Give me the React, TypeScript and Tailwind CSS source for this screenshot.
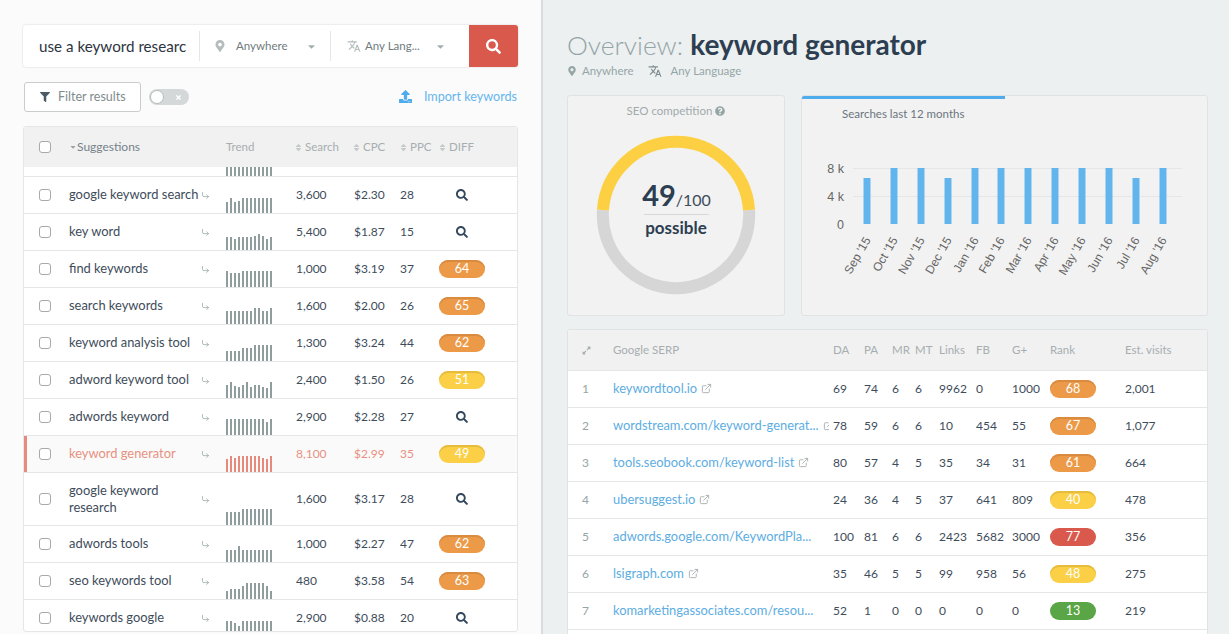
import { CornerDownRight, ExternalLink } from "lucide-react";
import { FaCaretDown, FaExpandAlt, FaFilter, FaMapMarkerAlt, FaQuestionCircle, FaSearch, FaSort, FaTimes, FaUpload } from "react-icons/fa";
import { MdTranslate } from "react-icons/md";

const orange = "bg-[#ec9a48] shadow-[inset_0_2px_0_#d98b40]";
const yellow = "bg-[#fbd046] shadow-[inset_0_2px_0_#e6bc3e]";
const red = "bg-[#d9594c]";
const green = "bg-[#5aa545]";

function badgeColor(n: number) {
  if (n < 30) return green;
  if (n < 60) return yellow;
  if (n < 70) return orange;
  return red;
}

const keywords = [
  { name: "google keyword search", search: "3,600", cpc: "$2.30", ppc: 28, diff: 0, bars: [11, 15, 11, 12, 15, 15, 15, 15, 15, 15, 15, 15] },
  { name: "key word", search: "5,400", cpc: "$1.87", ppc: 15, diff: 0, bars: [13, 13, 11, 13, 13, 13, 13, 14, 16, 14, 11, 13] },
  { name: "find keywords", search: "1,000", cpc: "$3.19", ppc: 37, diff: 64, bars: [16, 14, 14, 14, 16, 16, 16, 16, 16, 16, 16, 16] },
  { name: "search keywords", search: "1,600", cpc: "$2.00", ppc: 26, diff: 65, bars: [13, 13, 13, 13, 13, 13, 13, 16, 16, 13, 13, 16] },
  { name: "keyword analysis tool", search: "1,300", cpc: "$3.24", ppc: 44, diff: 62, bars: [10, 10, 10, 10, 13, 13, 13, 16, 16, 16, 16, 16] },
  { name: "adword keyword tool", search: "2,400", cpc: "$1.50", ppc: 26, diff: 51, bars: [13, 16, 12, 11, 13, 16, 11, 13, 13, 11, 10, 16] },
  { name: "adwords keyword", search: "2,900", cpc: "$2.28", ppc: 27, diff: 0, bars: [16, 16, 16, 16, 16, 16, 16, 16, 16, 16, 13, 16] },
  { name: "keyword generator", search: "8,100", cpc: "$2.99", ppc: 35, diff: 49, active: true, bars: [13, 16, 14, 16, 16, 16, 16, 16, 16, 14, 13, 16] },
  { name: "google keyword research", search: "1,600", cpc: "$3.17", ppc: 28, diff: 0, tall: true, bars: [13, 13, 13, 13, 16, 16, 16, 16, 16, 16, 16, 16] },
  { name: "adwords tools", search: "1,000", cpc: "$2.27", ppc: 47, diff: 62, bars: [12, 12, 12, 16, 12, 12, 12, 12, 12, 12, 12, 12] },
  { name: "seo keywords tool", search: "480", cpc: "$3.58", ppc: 54, diff: 63, bars: [8, 10, 10, 10, 13, 16, 16, 16, 16, 16, 13, 8] },
  { name: "keywords google", search: "2,900", cpc: "$0.88", ppc: 20, diff: 0, bars: [15, 15, 13, 10, 15, 15, 15, 15, 15, 15, 15, 15] },
];

const serp = [
  { url: "keywordtool.io", da: 69, pa: 74, mr: 6, mt: 6, links: 9962, fb: 0, gp: 1000, rank: 68, visits: "2,001", icon: true },
  { url: "wordstream.com/keyword-generat...", da: 78, pa: 59, mr: 6, mt: 6, links: 10, fb: 454, gp: 55, rank: 67, visits: "1,077", icon: true },
  { url: "tools.seobook.com/keyword-list", da: 80, pa: 57, mr: 4, mt: 5, links: 35, fb: 34, gp: 31, rank: 61, visits: "664", icon: true },
  { url: "ubersuggest.io", da: 24, pa: 36, mr: 4, mt: 5, links: 37, fb: 641, gp: 809, rank: 40, visits: "478", icon: true },
  { url: "adwords.google.com/KeywordPla...", da: 100, pa: 81, mr: 6, mt: 6, links: 2423, fb: 5682, gp: 3000, rank: 77, visits: "356", icon: false },
  { url: "lsigraph.com", da: 35, pa: 46, mr: 5, mt: 5, links: 99, fb: 958, gp: 56, rank: 48, visits: "275", icon: true },
  { url: "komarketingassociates.com/resou...", da: 52, pa: 1, mr: 0, mt: 0, links: 0, fb: 0, gp: 0, rank: 13, visits: "219", icon: false },
];

const months = ["Sep '15", "Oct '15", "Nov '15", "Dec '15", "Jan '16", "Feb '16", "Mar '16", "Apr '16", "May '16", "Jun '16", "Jul '16", "Aug '16"];
const barX = [65, 92, 119, 146, 173, 199, 226, 253, 280, 307, 334, 361];
const barTop = [56, 46, 46, 56, 46, 46, 46, 46, 46, 46, 56, 46];

function Check() {
  return <input type="checkbox" className="appearance-none block w-[12px] h-[12px] rounded-[3px] border border-[#a9a9a9] bg-white" />;
}

function Badge({ value }: { value: number }) {
  return <div className={"w-[46px] h-[18px] rounded-[9px] text-white text-[12.5px] leading-[18px] text-center " + badgeColor(value)}>{value}</div>;
}

function Trend({ bars, color }: { bars: number[]; color: string }) {
  return (
    <div className="flex items-end gap-[2px] h-full">
      {bars.map((h, i) => (
        <div key={i} className={"w-[2px] " + color} style={{ height: h }} />
      ))}
    </div>
  );
}

function SortHead({ label, width }: { label: string; width: string }) {
  return (
    <div className={"flex items-center gap-[2px] " + width}>
      <FaSort className="text-[#c5c9ca] -ml-[2px]" size={9} />
      <span>{label}</span>
    </div>
  );
}

export default function App() {
  return (
    <div className="flex w-[1229px] h-[634px] overflow-hidden bg-[#ecf0f1] font-['Lato','Noto_Sans',sans-serif] text-[13px] text-[#3e4c5a]">
      <aside className="w-[543px] h-full shrink-0 bg-[#fbfbfb] border-r-2 border-[#d8dcde] pl-[23px] pr-[23px] pt-[25px]">
        <div className="flex items-stretch h-[42px] bg-white rounded-[3px] shadow-[0_0_2px_rgba(0,0,0,0.2)] overflow-hidden">
          <div className="w-[176px] flex items-center pl-[16px] border-0">
            <div className="whitespace-nowrap text-[15.2px] text-[#2c3440]">use a keyword researc</div>
          </div>
          <div className="w-[131px] flex items-center my-[6px] border-l border-[#e6e6e6] pl-[14px] text-[11.5px] text-[#6f7b7d]">
            <FaMapMarkerAlt className="text-[#b4bcbe] mr-[10px]" size={12} />
            <span className="w-[70px]">Anywhere</span>
            <FaCaretDown className="text-[#a5adb0]" size={11} />
          </div>
          <div className="w-[139px] flex items-center my-[6px] border-l border-[#e6e6e6] pl-[16px] text-[11.5px] text-[#6f7b7d]">
            <MdTranslate className="text-[#b4bcbe] mr-[4px]" size={14} />
            <span className="w-[70px]">Any Lang...</span>
            <FaCaretDown className="text-[#a5adb0]" size={11} />
          </div>
          <div className="w-[49px] bg-[#d9594c] flex items-center justify-center">
            <FaSearch className="text-white" size={15} />
          </div>
        </div>

        <div className="flex items-center h-[30px] mt-[15px]">
          <div className="w-[117px] h-[30px] ml-[1px] flex items-center pl-[15px] gap-[8px] border border-[#c9cccd] rounded-[3px] bg-white text-[12.5px] text-[#7f8c8d]">
            <FaFilter className="text-[#4c5a66]" size={10} />
            <span>Filter results</span>
          </div>
          <div className="relative w-[40px] h-[16px] ml-[8px] rounded-[8px] bg-[#d5d8d9] flex items-center">
            <div className="w-[14px] h-[14px] ml-[1px] rounded-full bg-white border border-[#b7bbbd]" />
            <FaTimes className="text-white ml-[11px]" size={7} />
          </div>
          <div className="ml-auto pr-[1px] flex items-center text-[12.6px] text-[#65b6ee]">
            <FaUpload className="text-[#4facec] mr-[12px]" size={13} />
            <span>Import keywords</span>
          </div>
        </div>

        <div className="mt-[14px] h-[506px] bg-white rounded-[3px] border border-[#e6e6e6] overflow-hidden">
          <div className="flex items-center h-[40px] bg-[#f1f1f1] text-[11.5px] text-[#a6aeb0]">
            <div className="w-[45px] pl-[15px]"><Check /></div>
            <div className="w-[157px] flex items-center text-[12px] text-[#76828a]">
              <FaCaretDown className="text-[#9aa2a5]" size={8} />
              <span>Suggestions</span>
            </div>
            <div className="w-[70px]">Trend</div>
            <SortHead label="Search" width="w-[58px]" />
            <SortHead label="CPC" width="w-[47px]" />
            <SortHead label="PPC" width="w-[39px]" />
            <SortHead label="DIFF" width="w-[46px]" />
          </div>
          <div className="flex h-[10px] border-b border-[#e4e6e7]">
            <div className="ml-[202px] h-[9px]">
              <Trend bars={[9, 9, 9, 9, 9, 9, 9, 9, 9, 9, 9, 9]} color="bg-[#8f9d9e]" />
            </div>
          </div>
          {keywords.map((k) => (
            <div
              key={k.name}
              className={
                "flex items-center border-b border-[#e4e6e7] " +
                (k.tall ? "h-[53px] " : "h-[37px] ") +
                (k.active ? "bg-[#fafafa] text-[#e8907f] shadow-[inset_3px_0_0_#e8897d]" : "")
              }
            >
              <div className="w-[45px] pl-[15px] shrink-0"><Check /></div>
              <div className="w-[132px] shrink-0 leading-[17px] pb-[1px] pr-[1px] text-[12.9px]">{k.name}</div>
              <div className="w-[25px] shrink-0"><CornerDownRight className="text-[#98a5a6]" size={9} /></div>
              <div className="w-[70px] shrink-0 h-full">
                <Trend bars={k.bars} color={k.active ? "bg-[#e8897d]" : "bg-[#8f9d9e]"} />
              </div>
              <div className="w-[58px] shrink-0 text-[12px]">{k.search}</div>
              <div className="w-[46px] shrink-0 text-[12px]">{k.cpc}</div>
              <div className="w-[39px] shrink-0 text-[12px]">{k.ppc}</div>
              <div className="w-[46px] shrink-0 flex justify-center">
                {k.diff ? <Badge value={k.diff} /> : <FaSearch className="text-[#34495e]" size={12} />}
              </div>
            </div>
          ))}
        </div>
      </aside>

      <main className="w-[686px] pl-[24px] pt-[28px]">
        <h1 className="h-[32px] text-[28px] leading-[32px] text-[#95a5a6] font-light whitespace-nowrap">
          <span className="text-[26.4px]">Overview: </span>
          <span className="font-bold text-[#2c3e50]">keyword generator</span>
        </h1>
        <div className="flex items-center h-[16px] mt-[3px] text-[11.5px] text-[#95a5a6]">
          <FaMapMarkerAlt className="mr-[5px]" size={10} />
          <span>Anywhere</span>
          <MdTranslate className="ml-[14px] mr-[9px] text-[#7f8c8d]" size={14} />
          <span>Any Language</span>
        </div>

        <div className="flex gap-[16px] mt-[16px] h-[221px]">
          <div className="w-[218px] bg-[#f2f2f2] rounded-[3px] border border-[#dfe3e4]">
            <div className="flex items-center justify-center gap-[3px] mt-[7px] h-[16px] text-[11.5px] text-[#a0aaac]">
              <span>SEO competition</span>
              <FaQuestionCircle className="text-[#95a5a6]" size={10} />
            </div>
            <div className="relative w-[160px] h-[160px] mx-auto mt-[16px]">
              <svg width="160" height="160" viewBox="0 0 160 160">
                <path d="M6.97 75 A73.2 73.2 0 1 0 153.03 75" fill="none" stroke="#d6d6d6" strokeWidth="12" />
                <path d="M6.97 75 A73.2 73.2 0 0 1 153.03 75" fill="none" stroke="#fdd043" strokeWidth="12" />
              </svg>
              <div className="absolute inset-0 flex flex-col items-center pt-[42px] text-[#2c3e50]">
                <div className="h-[36px] leading-[36px] whitespace-nowrap pl-[1px]">
                  <span className="text-[29px] font-bold">49</span>
                  <span className="text-[16px] text-[#3e4c5a]">/100</span>
                </div>
                <div className="w-[65px] border-t border-[#d8d8d8] mt-[1px]" />
                <div className="text-[17px] font-bold leading-[24px] mt-[1px]">possible</div>
              </div>
            </div>
          </div>

          <div className="w-[407px] bg-[#f2f2f2] rounded-[3px] border border-[#dfe3e4] overflow-hidden">
            <div className="w-[203px] h-[3px] bg-[#4facec]" />
            <div className="pl-[40px] mt-[7px] h-[16px] text-[11.5px] leading-[16px] text-[#6b7680]">Searches last 12 months</div>
            <svg width="405" height="190" viewBox="0 0 405 190" className="block">
              <line x1="51" x2="380" y1="46.5" y2="46.5" stroke="#e6e6e6" />
              <line x1="51" x2="380" y1="74.5" y2="74.5" stroke="#e6e6e6" />
              <g fontFamily="'Liberation Sans', sans-serif" fontSize="12.5" fill="#666" textAnchor="end">
                <text x="42" y="50.5">8 k</text>
                <text x="42" y="78.5">4 k</text>
                <text x="42" y="106.5">0</text>
              </g>
              {barX.map((x, i) => (
                <rect key={x} x={x - 3.5} y={barTop[i]} width="7" height={102 - barTop[i]} fill="#62b5ec" />
              ))}
              <g fontFamily="'Liberation Sans', sans-serif" fontSize="12" fill="#666" textAnchor="end">
                {months.map((m, i) => (
                  <text key={m} x={barX[i] + 4} y={118} transform={`rotate(-60 ${barX[i] + 4} 118)`}>{m}</text>
                ))}
              </g>
            </svg>
          </div>
        </div>

        <div className="mt-[13px] w-[641px] h-[320px] bg-white rounded-[3px] border border-[#dfe3e4] overflow-hidden">
          <div className="flex items-center h-[41px] bg-[#f1f1f1] border-b border-[#e4e6e7] text-[11.5px] text-[#a6aeb0]">
            <div className="w-[45px] pl-[14px]"><FaExpandAlt className="text-[#a6aeb0]" size={9} /></div>
            <div className="w-[220px]">Google SERP</div>
            <div className="w-[31px]">DA</div>
            <div className="w-[28px]">PA</div>
            <div className="w-[23px]">MR</div>
            <div className="w-[24px]">MT</div>
            <div className="w-[37px]">Links</div>
            <div className="w-[36px]">FB</div>
            <div className="w-[38px]">G+</div>
            <div className="w-[75px]">Rank</div>
            <div>Est. visits</div>
          </div>
          {serp.map((r, i) => (
            <div key={r.url} className="flex items-center h-[37px] border-b border-[#e4e6e7] text-[12px]">
              <div className="w-[45px] pl-[14px] text-[#95a5a6]">{i + 1}</div>
              <div className="w-[216px] mr-[4px] flex items-center overflow-hidden text-[12.9px] text-[#5dade2] whitespace-nowrap">
                <span className="shrink-0">{r.url}</span>
                {r.icon && <ExternalLink className="ml-[4px] shrink-0 text-[#a6aeb0]" size={11} />}
              </div>
              <div className="w-[31px]">{r.da}</div>
              <div className="w-[28px]">{r.pa}</div>
              <div className="w-[23px]">{r.mr}</div>
              <div className="w-[24px]">{r.mt}</div>
              <div className="w-[37px]">{r.links}</div>
              <div className="w-[36px]">{r.fb}</div>
              <div className="w-[38px]">{r.gp}</div>
              <div className="w-[75px]"><Badge value={r.rank} /></div>
              <div>{r.visits}</div>
            </div>
          ))}
        </div>
      </main>
    </div>
  );
}
